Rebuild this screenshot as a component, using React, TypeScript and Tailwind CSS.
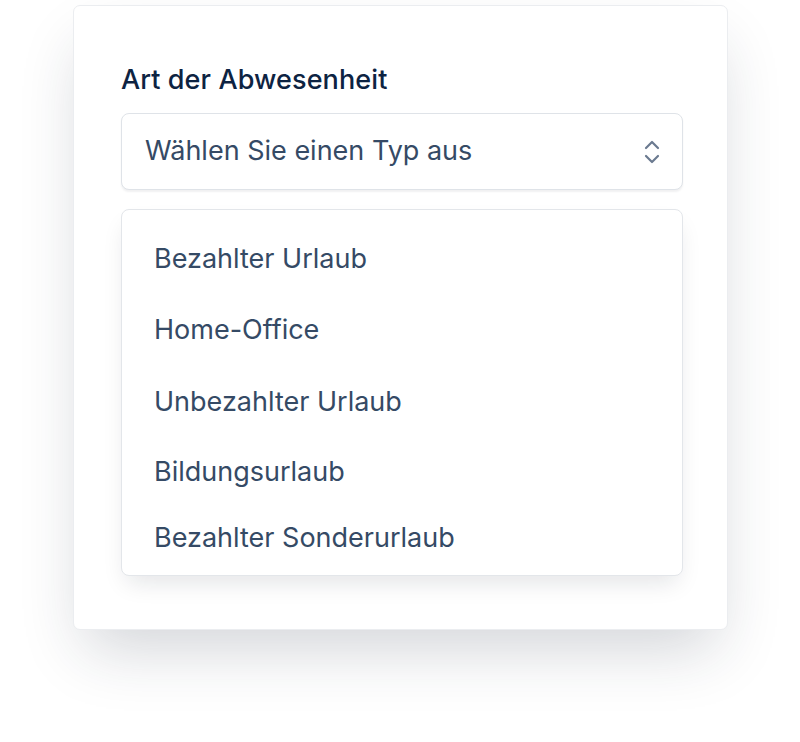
import { useState } from 'react'

const options = [
  'Bezahlter Urlaub',
  'Home-Office',
  'Unbezahlter Urlaub',
  'Bildungsurlaub',
  'Bezahlter Sonderurlaub',
]

// row heights tuned per item to follow the picture's uneven spacing
const rowHeights = ['h-[70px]', 'h-[72px]', 'h-[72px]', 'h-[68px]', 'h-[64px]']

function Chevrons() {
  return (
    <svg width="18" height="30" viewBox="0 0 18 30" fill="none" stroke="#6b7a90" strokeWidth="2.2" strokeLinecap="round" strokeLinejoin="round">
      <path d="M3 11 L9 5 L15 11" />
      <path d="M3 19 L9 25 L15 19" />
    </svg>
  )
}

export default function App() {
  const [selected, setSelected] = useState<string | null>(null)

  return (
    <div className="w-[800px] h-[742px] bg-white pt-[5px] pl-[73px]" style={{ fontFamily: 'Inter, "Noto Sans", sans-serif' }}>
      <div className="w-[655px] h-[625px] rounded-[7px] bg-white border border-[#ebedf0] shadow-[0_30px_60px_-12px_rgba(30,41,59,0.2)] pl-[47px] pr-[44px] pt-[58px]">
        <label className="block text-[27px] leading-[32px] font-medium text-[#0d2342] tracking-[0.1px]">Art der Abwesenheit</label>

        {/* Select trigger */}
        <button
          type="button"
          className="mt-[17px] w-full h-[77px] flex items-center justify-between rounded-[8px] border border-[#dfe3e8] bg-white shadow-[0_2px_2px_rgba(15,23,42,0.06)] pl-[23px] pr-[21px] text-left"
        >
          <span className="text-[27px] text-[#354a65]">{selected ?? 'Wählen Sie einen Typ aus'}</span>
          <Chevrons />
        </button>

        {/* Options list */}
        <div className="mt-[19px] h-[367px] overflow-hidden rounded-[8px] border border-[#e3e6ea] bg-white shadow-[0_12px_24px_-6px_rgba(15,23,42,0.12)] pt-[14px] px-[32px]">
          {options.map((o, i) => (
            <div
              key={o}
              onClick={() => setSelected(o)}
              className={`flex items-center text-[27px] text-[#354a65] cursor-pointer ${rowHeights[i]}`}
            >
              {o}
            </div>
          ))}
        </div>
      </div>
    </div>
  )
}
